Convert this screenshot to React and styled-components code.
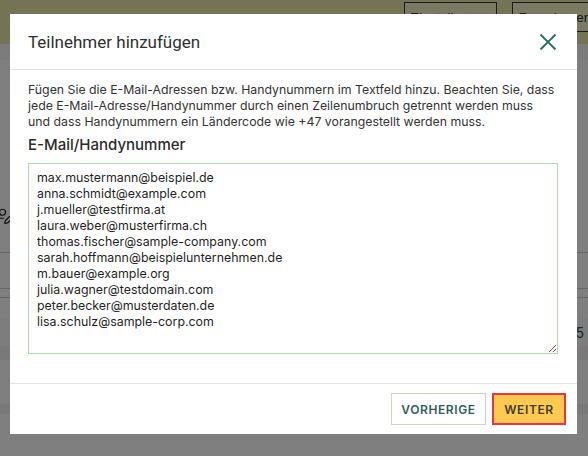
import React from 'react'
import styled, { createGlobalStyle } from 'styled-components'
import { UserPen } from 'lucide-react'

const GlobalStyle = createGlobalStyle`
    html, body {
        margin: 0;
        padding: 0;
        width: 588px;
        height: 456px;
        overflow: hidden;
        font-family: Inter, "Noto Sans", sans-serif;
    }
`

const Page = styled.div`
    position: relative;
    width: 588px;
    height: 456px;
    background: #ffffff;
    overflow: hidden;
`

const TopBar = styled.div`
    display: flex;
    align-items: flex-start;
    gap: 5px;
    height: 44px;
    background: #e8e8ab;
    box-sizing: border-box;
    padding: 2px 0 0 404px;
    overflow: hidden;
`

const Crumb = styled.div`
    flex-shrink: 0;
    height: 28px;
    padding: 0 5px;
    border: 1px solid #333;
    font-family: "Liberation Sans", Arial, sans-serif;
    font-size: 13.5px;
    line-height: 30px;
    color: #333;
    background: #f4f4c8;
`

const CrumbSep = styled.span`
    font-size: 14px;
    line-height: 30px;
    color: #333;
`

const SideList = styled.div`
    display: flex;
    flex-direction: column;
`

const SideRow = styled.div`
    height: ${p => p.$h}px;
    background: ${p => p.$bg || '#ffffff'};
    border-bottom: ${p => (p.$line ? '1px solid #cfcfcf' : 'none')};
    display: flex;
    align-items: center;
    justify-content: space-between;
    padding: 0 4px;
    color: #225a58;
    font-size: 14px;

    svg {
        margin-left: -9px;
        color: #1e1e1e;
    }
`

const Backdrop = styled.div`
    position: absolute;
    inset: 0;
    background: rgba(0, 0, 0, 0.5);
`

const Modal = styled.div`
    position: absolute;
    left: 10px;
    top: 14px;
    width: 567px;
    height: 420px;
    background: #fff;
    display: flex;
    flex-direction: column;
`

const Header = styled.div`
    display: flex;
    align-items: center;
    justify-content: space-between;
    height: 56px;
    padding: 0 20px 0 18px;
    border-bottom: 1px solid #e3e3e3;
    box-sizing: border-box;
    flex-shrink: 0;
`

const Title = styled.h2`
    margin: 0;
    font-family: Roboto, "Liberation Sans", Arial, sans-serif;
    font-weight: 400;
    font-size: 17px;
    color: #2f2f2f;
`

const CloseButton = styled.button`
    display: flex;
    padding: 0;
    border: none;
    background: none;
    cursor: pointer;
`

const Body = styled.div`
    flex: 1;
    padding: 12px 19px 29px 18px;
    display: flex;
    flex-direction: column;
    border-bottom: 1px solid #e3e3e3;
`

const Intro = styled.p`
    margin: 0;
    font-size: 12.3px;
    line-height: 16px;
    color: #333;
`

const Label = styled.h3`
    margin: 5px 0 8px;
    font-size: 15px;
    font-weight: 500;
    line-height: 20px;
    color: #2b2b2b;
`

const Field = styled.textarea`
    flex: 1;
    resize: vertical;
    margin: 0;
    padding: 6px 8px;
    border: 1px solid #a6e0a0;
    outline: none;
    font-family: Inter, "Noto Sans", sans-serif;
    font-size: 12.4px;
    line-height: 16px;
    color: #1f1f1f;
`

const Footer = styled.div`
    display: flex;
    justify-content: flex-end;
    align-items: center;
    gap: 6px;
    height: 50px;
    padding: 0 11px 0 0;
`

const Button = styled.button`
    width: ${p => (p.$primary ? '74px' : '95px')};
    height: 32px;
    padding: 0;
    font-family: Inter, "Noto Sans", sans-serif;
    font-size: 12px;
    font-weight: 600;
    letter-spacing: 0.6px;
    color: ${p => (p.$primary ? '#3d3d2a' : '#2c5f5b')};
    background: ${p => (p.$primary ? '#ffca4f' : '#fff')};
    border: ${p => (p.$primary ? '2px solid #ef3340' : '1px solid #c9d8be')};
    cursor: pointer;
`

const emails = [
    'max.mustermann@beispiel.de',
    'anna.schmidt@example.com',
    'j.mueller@testfirma.at',
    'laura.weber@musterfirma.ch',
    'thomas.fischer@sample-company.com',
    'sarah.hoffmann@beispielunternehmen.de',
    'm.bauer@example.org',
    'julia.wagner@testdomain.com',
    'peter.becker@musterdaten.de',
    'lisa.schulz@sample-corp.com',
]

const App = () => {
    return (
        <Page>
            <GlobalStyle />
            <TopBar>
                <Crumb>Einstellungen</Crumb>
                <CrumbSep>›</CrumbSep>
                <Crumb>Fragebogen</Crumb>
            </TopBar>
            <SideList>
                <SideRow $h={16} $bg="#f8f8f8" />
                <SideRow $h={40} />
                <SideRow $h={80} />
                <SideRow $h={72} $line>
                    <UserPen size={18} strokeWidth={1.6} />
                </SideRow>
                <SideRow $h={35} $line />
                <SideRow $h={8} $line />
                <SideRow $h={20} />
                <SideRow $h={28} $bg="#fafafa">
                    <span />
                    <span>5</span>
                </SideRow>
                <SideRow $h={14} $bg="#f2f2f2" />
                <SideRow $h={44} />
                <SideRow $h={10} $bg="#f2f2f2" />
            </SideList>
            <Backdrop />
            <Modal>
                <Header>
                    <Title>Teilnehmer hinzufügen</Title>
                    <CloseButton aria-label="Schließen">
                        <svg width="18" height="18" viewBox="0 0 18 18">
                            <path d="M1.5 1.5 L16.5 16.5 M16.5 1.5 L1.5 16.5" stroke="#2a6f5e" strokeWidth="1.8" fill="none" />
                        </svg>
                    </CloseButton>
                </Header>
                <Body>
                    <Intro>
                        Fügen Sie die E-Mail-Adressen bzw. Handynummern im Textfeld hinzu. Beachten Sie, dass<br />
                        jede E-Mail-Adresse/Handynummer durch einen Zeilenumbruch getrennt werden muss<br />
                        und dass Handynummern ein Ländercode wie +47 vorangestellt werden muss.
                    </Intro>
                    <Label>E-Mail/Handynummer</Label>
                    <Field defaultValue={emails.join('\n')} />
                </Body>
                <Footer>
                    <Button>VORHERIGE</Button>
                    <Button $primary>WEITER</Button>
                </Footer>
            </Modal>
        </Page>
    )
}

export default App
